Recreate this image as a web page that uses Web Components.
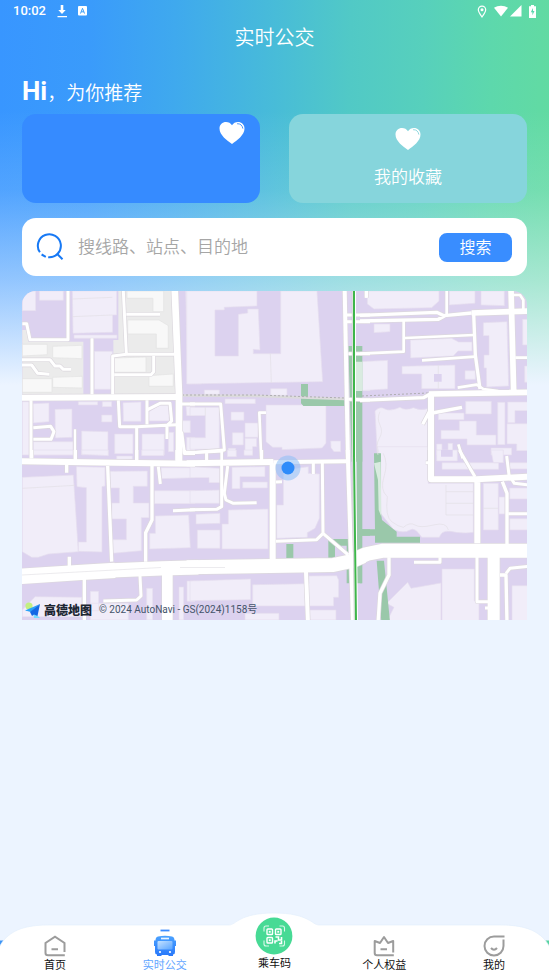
<!DOCTYPE html>
<html lang="zh-CN">
<head>
<meta charset="utf-8">
<meta name="viewport" content="width=device-width, initial-scale=1">
<title>实时公交</title>
<style>
html,body{margin:0;padding:0}
body{font-family:Roboto,"Noto Sans CJK SC",sans-serif;color:#fff}
</style>
</head>
<body>
<transit-page>
  <status-bar slot="top" time="10:02"></status-bar>
  <page-title slot="top">实时公交</page-title>
  <hello-line name="Hi">，为你推荐</hello-line>
  <card-row>
    <fav-card kind="solid" label="收藏"></fav-card>
    <fav-card kind="soft">我的收藏</fav-card>
  </card-row>
  <search-box hint="搜线路、站点、目的地">搜索</search-box>
  <city-map></city-map>
  <tab-bar slot="bottom">
    <tab-item icon="home">首页</tab-item>
    <tab-item icon="bus" active>实时公交</tab-item>
    <tab-item icon="code">乘车码</tab-item>
    <tab-item icon="crown">个人权益</tab-item>
    <tab-item icon="me">我的</tab-item>
  </tab-bar>
</transit-page>
<script>
const define = (name, render) => customElements.define(name, class extends HTMLElement {
  constructor() { super(); this.attachShadow({ mode: 'open' }); }
  connectedCallback() { this.shadowRoot.innerHTML = render(this); }
});

define('transit-page', () => `
<style>
:host{display:flex;flex-direction:column;min-height:100vh;
 background:linear-gradient(to bottom,rgba(236,244,255,0) 110px,rgba(236,244,255,.14) 190px,rgba(236,244,255,.5) 280px,#ecf4ff 385px),
 linear-gradient(91deg,#3896ff 0%,#3a9bfb 16%,#3fa9ee 31%,#48bcd8 49%,#51c9c6 62%,#57d0bc 75%,#5dd8ac 87%,#63dba0 100%)}
main{flex:1;display:flex;flex-direction:column;gap:15px;padding:0 22px 20px}
</style>
<header><slot name="top"></slot></header>
<main><slot></slot></main>
<slot name="bottom"></slot>`);

define('status-bar', el => `
<style>
:host{display:flex;align-items:center;height:22px;padding:0 12px 0 13px;font:500 13px/22px Roboto,sans-serif}
.left{display:flex;align-items:center;gap:10px;flex:1}
.right{display:flex;align-items:center;gap:2px}
svg{display:block}
.pin{margin-right:5px}.bat{margin-left:4px}
</style>
<div class="left"><span>${el.getAttribute('time')}</span>
<svg width="12" height="14" viewBox="0 0 12 14"><path fill="#fff" d="M4.700 1h2.600v5h2.400L6 10 2.300 6H4.700zM1.500 12h9.500v1.300h-9.500z"/></svg>
<svg width="10" height="10" viewBox="0 0 10 10"><rect width="9" height="9.500" rx="1" fill="#fff"/><path d="M2.500 7.500 4.500 2.300 6.500 7.500M3.200 5.800H5.800" fill="none" stroke="#3d9ff7" stroke-width="1"/></svg></div>
<div class="right">
<svg class="pin" width="10" height="13" viewBox="0 0 10 13"><path d="M5 12C3 9.300 1.300 7 1.300 4.800a3.700 3.700 0 0 1 7.400 0C8.700 7 7 9.300 5 12z" fill="none" stroke="#fff" stroke-width="1.200"/><circle cx="5" cy="4.800" r="1.500" fill="#fff"/></svg>
<svg width="14" height="12" viewBox="0 0 14 12"><path d="M0 2.800C4 0 10 0 14 2.800L7 11.500z" fill="#fff"/></svg>
<svg width="12" height="12" viewBox="0 0 12 12"><path d="M11.500 0v11.500H0z" fill="#fff"/></svg>
<svg class="bat" width="9" height="13" viewBox="0 0 9 13"><path d="M3 0h3v1.300h2V13H1V1.300h2z" fill="#fff"/><path d="M5 3 2.800 7.300h1.600v3L6.500 6H5z" fill="#5bd6ad"/></svg>
</div>`);

define('page-title', () => `
<style>:host{display:block;text-align:center}h1{margin:0;font:350 20px/30px "Noto Sans CJK SC",sans-serif}</style>
<h1><slot></slot></h1>`);

define('hello-line', el => `
<style>:host{display:block;padding-top:23px;margin-bottom:-12px}
p{margin:0;font:350 19px/32px "Noto Sans CJK SC",sans-serif;height:36px}b{font:700 26px/32px Roboto,sans-serif}</style>
<p><b>${el.getAttribute('name')}</b><slot></slot></p>`);

define('card-row', () => `
<style>:host{display:grid;grid-template-columns:1fr 1fr;gap:29px}</style><slot></slot>`);

define('fav-card', el => `
<style>
:host{display:grid}
button{all:unset;box-sizing:border-box;cursor:pointer;height:89px;border-radius:14px;display:flex;flex-direction:column;align-items:center;
 font:350 17px/26px "Noto Sans CJK SC",sans-serif;color:#fff;padding:13px 15px 0;gap:12px}
.solid{background:#368bff;align-items:flex-end;padding-top:7px}
.soft{background:#86d5dc}
svg{display:block;flex:none}
</style>
<button class="${el.getAttribute('kind')}" ${el.hasAttribute('label') ? `aria-label="${el.getAttribute('label')}"` : ''}>
<svg width="26" height="24" viewBox="0 0 26 24"><path fill="#fff" d="M13 23C8 19.500.5 14 .5 7.500.500 3.500 3.500 1 7 1c2.500 0 4.800 1.200 6 3.300C14.200 2.200 16.500 1 19 1c3.500 0 6.500 2.500 6.500 6.500C25.500 14 18 19.500 13 23z"/><path d="M18.500 2.700c2.800-.2 4.800 1.600 5.300 4.500" fill="none" stroke="${el.getAttribute('kind') === 'solid' ? '#368bff' : '#86d5dc'}" stroke-width=".9" stroke-linecap="round"/></svg>
<slot></slot></button>`);

define('search-box', el => `
<style>
:host{display:block}
form{display:flex;align-items:center;height:58px;box-sizing:border-box;background:#fff;border-radius:14px;padding:0 15px 0 14px;margin:0}
svg{flex:none;margin-right:14px}
input{all:unset;flex:1;min-width:0;font:350 17px/28px "Noto Sans CJK SC",sans-serif;color:#333;padding-bottom:2px}
input::placeholder{color:#a6a6a6;opacity:1}
button{border:0;background:#398dff;color:#fff;border-radius:8px;width:73px;height:29px;padding:0 0 2px;font:350 16px/27px "Noto Sans CJK SC",sans-serif}
</style>
<form onsubmit="return false">
<svg width="28" height="28" viewBox="0 0 28 28" fill="none" stroke="#1779f5" stroke-width="2"><path d="M3.900 19.300A11.500 11.500 0 1 1 12.200 24.200"/><path d="M5.600 21.500 9.800 23.800"/><path d="M21 20.800 26.500 26.200"/></svg>
<input type="search" aria-label="${el.getAttribute('hint')}" placeholder="${el.getAttribute('hint')}">
<button type="submit"><slot></slot></button>
</form>`);

/* Map tiles: each has an origin, and paths drawn at three units to the pixel.
   land/grey = grey block and its buildings, b = buildings, g = parks, lg = pale park, r = [width, path] roads. */
const tiles = [
 {x:15,y:285,
  land:'M22 170H205V328H22zM22 135H40V180H22zM310 18H480V205L500 330H295V165H310z',
  grey:'M22 178H97V209L22 213zM113 184L201 181V221L113 218zM22 281H111V322H22zM113 277L202 274V309L113 307zM336 18H446V80H414V40H336zM338 105H432L460 122V190H424V147H338zM298 219L393 216V262H298zM402 272L475 267V304H402z',
  b:'M22 18H62V77H22zM73 18H145V46H73zM172 18H305V90H293V142L174 145zM177 150H306V160H177zM238 199H292V313H238zM512 18H560V297H518zM22 350H42V510H22zM54 356L102 354V410L55 414zM120 373L171 372V457L121 459zM190 350H248V360H190zM262 350H290V365H262zM260 390H291V411H260zM55 470H174V510H55zM200 438L279 440V510H200zM299 447H354V506H299zM381 447H448V510H381zM324 353L378 351V409H325zM402 380L435 360H460L463 408H402zM460 442H476V500H460zM513 364H540V392H515zM502 407H526V443H502zM515 457H540V497H515z',
  r:[[9,'M22 116H35L45 164H159V18'],[9,'M18 224H105L120 243H135L145 253H168M18 240H50L68 265L103 268'],[18,'M18 338L500 336'],[20,'M479 10L492 330V530'],[9,'M231 160V328M325 18L334 205M334 88H435M293 328V213L335 208H478M298 269H408L416 260V213M48 346V520M55 428L107 424L117 440L108 463H55M310 346L314 425H365L484 419M365 428V530M396 346V418M398 374L435 355H465L470 408L456 422V462M500 440L508 502H540M500 357H540'],[7,'M180 433V530']],
  l:'M172 42L292 37M172 95L292 90'},
 {x:190,y:285,
  b:'M-10 18H201V63L103 67V75H75V213H145V88L173 84V72H205L210 195L190 193V206H272V18H381L398 290L-10 297zM43 315H88V328H43zM242 311H291V331H242zM105 342H196V356H105zM0 367H88V493H0V458H46V392H0zM123 381H162V406H123zM165 414H204V457H165zM127 443H160V480H127zM165 460H200V485H188V510H165zM115 490H137V510H115zM228 360H408V475L396 489L276 494V487H248L228 470zM422 468H452V500H432L423 488zM517 230H540V317H517z',
  g:'M333 297H354V340H465V363H340L333 355zM475 183H517V530H485z',
  lg:'M498 230H517V318H498z',
  r:[[12,'M464 10L474 530'],[9,'M470 90H540M470 110H540M475 206H540M475 343L540 345M530 18V38M0 357H92L103 495L0 503'],[8,'M228 383H208L214 530M50 505V530M95 500V530']],
  l:'M241 206L244 292M46 367V392'},
 {x:360,y:285,
  b:'M22 18H237V48L215 68L42 72L22 57zM268 18H345V55L268 60zM363 18H433V62L363 60zM42 117H90V140L42 143zM151 165L275 160L296 171H336V198H294L280 213L152 219zM0 230L83 226V312L0 317zM126 244L285 240V311H185V267H126zM315 257H346V283H315zM370 113L441 110L446 303L380 306L379 249H372V210H387V152H370zM488 103H505V180H488zM494 243H505V292H494zM317 349H394V387H317zM235 384H312V404H235zM243 436H298V408H349V450H408V480H321V462H243zM413 352H435V479H413zM443 351H505V377H465V413H443zM441 416H505V497H470V477H441zM393 489H455V510H393zM230 477H246V510H230zM264 475H278V510H264zM45 378Q60 362 75 372Q90 380 120 367Q135 378 160 368Q180 378 203 371V510H52z',
  g:'M0 183H6V230H0zM0 318H6V510H0z',
  r:[[10,'M0 91L230 82L252 92L335 84M0 108L235 103L255 92'],[17,'M335 84L505 78'],[8,'M260 10V88M131 105V200L0 206M135 159L342 150M186 226L345 215M455 30H480L490 45V75M466 218H505M293 308L350 299L370 312L415 318M18 18V38M295 478L308 520'],[10,'M341 85L346 210L360 312M0 346L190 338L215 325M217 384L306 367M208 380L188 418'],[17,'M453 10L461 318M207 327L505 322'],[18,'M213 325V530']],
  sq:'M222 267H245V290H222z', l:'M235 242V267M235 290V311M60 380Q50 400 60 420T58 460T54 510'},
 {x:15,y:450,
  b:'M54 0H174V15H54zM200 0H280V17L200 13zM305 18H352V28H305zM380 0H446V17H380zM22 82L175 75L190 305L100 312L70 322H50L22 305zM184 50L270 52V108L261 110V306L190 304V276H214V113L186 110zM285 64L397 63V109H355V159H402V203H379V302L293 310V269H334V207H290V159H313V114H285zM438 53H540V83L440 86zM418 122H540V161H418zM421 198L521 195L526 293L404 297V250H421zM395 415H413V510H395zM226 424H251V482H226zM226 460H340V510H226zM60 440L200 442V500H22V480zM492 411H506V510H492zM516 393H540V454H516z',
  r:[[18,'M18 34L300 38L540 41'],[46,'M18 379L200 367L300 361'],[43,'M290 361L440 355L550 352'],[10,'M181 0V30M50 0V25M365 0V32M508 0V10H540M155 40V68M278 48L290 335M411 48V210L392 248V335M163 320V350M208 385V520'],[18,'M490 0V32'],[9,'M430 50L436 102M474 182L540 179M375 378L378 438L365 450L265 453'],[32,'M457 360V520']],
  l:'M22 115L180 106'},
 {x:190,y:450,
  b:'M0 50L90 55V98H57V83H0zM0 122L88 120V160H0zM126 52L225 50V80H150V116H126zM158 96H232V114H158zM18 193L90 190V220L18 222zM22 240H90V295H22zM115 180L234 177V297H96V222H115zM280 60L355 50V70L388 72V205L375 235L352 248V262L260 265V165H280zM0 393L182 387V449L0 452zM188 404L357 401V378L440 377L446 390V442H431V468H188zM165 490H267V510H165zM357 480H438V510H357zM112 0H139V20H112zM162 0H188V16H162z',
  g:'M289 282H310V325H289zM415 267H470V287H435V325H415zM470 267H500V0H517V238H540V257H517V400H470z',
  r:[[18,'M-10 40L250 36'],[12,'M250 37L470 34'],[9,'M0 8L100 3M50 10V30M215 0V30M95 45V170L80 178L0 179M113 48L103 130L108 150L130 160L200 158M258 96L276 95M370 36V72M397 38L399 250L380 269L258 274M399 250L475 315'],[18,'M248 40V330'],[42,'M-10 352L240 348L430 345L485 333L520 319'],[12,'M473 0L483 320L489 520M348 365L354 520']]},
 {x:360,y:450,
  b:'M52 -10L62 30V190L100 238Q130 252 150 240Q165 230 185 262H238Q245 240 270 244Q310 252 340 247V100H205V-10zM246 38H416V58H246zM230 0H292V33H230zM393 0H430V38H400zM370 100H415V240H370zM417 141H435V192H417zM449 114H505V147H449zM449 206H505V240H449zM449 38H505V57H449zM80 460L143 397L153 415L243 399V515H80L102 472zM246 357H343V452H357V515H246zM456 407H505V515H456z',
  g:'M0 0H5V400H0zM42 10H63V190L66 210L110 245V260H180V278H45V257H0V238H45zM50 332H72L90 515H64z',
  lg:'M42 40L62 35L64 200L56 180L54 90z',
  r:[[18,'M213 0V88H350L505 80M352 90V280'],[9,'M298 0L345 80M197 38H213M440 18L447 75L463 100L505 105M445 191H505M351 320V455H384M375 474H390M162 337H240V322M438 370L450 355L505 349'],[10,'M427 95L441 130V285M87 322V375L60 430L54 520M420 375H438L441 520'],[42,'M-20 330L20 312L70 302H505'],[36,'M401 310V520']],
  sq:'M243 0H278V20H243z',
  l:'M258 105V195H340M258 125H340M258 160H340M370 175H415M70 10Q85 40 72 80T82 140Q75 200 95 215T130 232Q150 215 165 225T220 225T265 240'}
];
const layer = (key, attrs) => tiles.filter(t => t[key]).map(t =>
  `<path transform="translate(${t.x} ${t.y}) scale(.33333)" d="${t[key]}" ${attrs}/>`).join('');
const roads = (extra, colour) => tiles.map(t => `<g transform="translate(${t.x} ${t.y}) scale(.33333)">` +
  t.r.map(([w, d]) => `<path d="${d}" stroke="${colour}" stroke-width="${w + extra}"/>`).join('') + '</g>').join('');

define('city-map', () => `
<style>
:host{display:block;position:relative;border-radius:14px 14px 0 0;overflow:hidden}
.map{display:block;width:100%;height:auto}
.credit{position:absolute;left:3px;bottom:0;display:flex;align-items:center;height:20px;color:#44546a;font:400 10px/20px Roboto,"Noto Sans CJK SC",sans-serif;white-space:nowrap}
b{font:900 12px/20px "Noto Sans CJK SC",sans-serif;color:#1d2733;margin:0 7px 0 3px}
</style>
<svg class="map" viewBox="22 291 505 329" role="img" aria-label="地图">
<rect x="22" y="291" width="505" height="329" fill="#dcd2ef"/>
${layer('land', 'fill="#ebebeb"')}
${layer('grey', 'fill="#f8f8f8" stroke="#e3e3e3" stroke-width="2"')}
${layer('b', 'fill="#f1edf9" stroke="#e5deef" stroke-width="2"')}
${layer('sq', 'fill="#dcd2ef"')}
${layer('g', 'fill="#9ac8aa"')}
${layer('lg', 'fill="#d9ebe0"')}
${layer('l', 'fill="none" stroke="#e2dfe6" stroke-width="2"')}
<g fill="none" stroke-linejoin="round">
<path d="M182 395.500 257 396 345 399" stroke="#dcdbdc" stroke-width="2.500"/>
<path d="M182 395 257 395 345 398M362 396 428 393" stroke="#aeadb0" stroke-width="1" stroke-dasharray="2 2"/>
${roads(4, '#dcd8de')}${roads(0, '#fff')}
<path d="M22 575 161 567.500M180 567.500H225" stroke="#e4e2e6" stroke-width=".7"/>
<path d="M354 291V455L356 620" stroke="#fff" stroke-width="4"/>
<path d="M352.300 291V455L354.300 620" stroke="#b8b8bc" stroke-width=".6"/>
<path d="M354 291V455L356 620" stroke="#3fb64b" stroke-width="2"/>
</g>
<circle cx="288" cy="468" r="12.500" fill="#8dbdf5" fill-opacity=".55"/><circle cx="288" cy="468" r="6.500" fill="#2e8cfa"/>
</svg>
<div class="credit"><svg width="16" height="17" viewBox="0 0 16 17"><circle cx="4" cy="4" r="3.600" fill="#c3ef82"/><path d="M8 10 15 16H9z" fill="#78dcff"/><path d="M15 2 0 8.500 6 10z" fill="#29a2f8"/><path d="M15 2 5 10 7 14 9 12.500 12.500 14z" fill="#1468e4"/></svg><b>高德地图</b><span>© 2024 AutoNavi - GS(2024)1158号</span></div>`);

define('tab-bar', () => `
<style>
:host{display:block;position:relative}
.bg{position:absolute;inset:0;width:100%;height:100%;z-index:0}
nav{position:relative;display:grid;grid-template-columns:repeat(5,1fr);align-items:end;height:64px}
</style>
<svg class="bg" viewBox="0 912 549 64" preserveAspectRatio="none" aria-hidden="true"><path d="M0 940H8V960H0z" fill="#3d94f5"/><path d="M541 940H549V960H541z" fill="#55d49f"/><path d="M0 912H549V940.500H0z" fill="#ecf4ff"/><path d="M-4 980V955C3 933 20 925 48 925H229C236 925 239 913 274 913S312 925 319 925H501C529 925 546 933 553 955V980z" fill="#fff" stroke="#e4effc" stroke-width=".7"/></svg>
<nav><slot></slot></nav>`);

const q = (x, y) => `<rect x="${x}" y="${y}" width="5.500" height="5.500" rx=".8" stroke-width="1.400"/><rect x="${x + 1.8}" y="${y + 1.8}" width="1.900" height="1.900" fill="#fff" stroke="none"/>`;
const icons = {
  home: '<svg width="22" height="22" viewBox="0 0 22 22" fill="none" stroke="#9c9c9c" stroke-width="2"><path d="M20.500 17V8L11 1.700 1.500 8V18Q1.500 20.300 4 20.300H20.800M7.500 14.300H14"/></svg>',
  bus: '<svg width="24" height="28" viewBox="0 0 24 28"><defs><linearGradient id="a" x2="0" y2="1"><stop stop-color="#4ba2ff"/><stop offset="1" stop-color="#2878fa"/></linearGradient><linearGradient id="b" x2="1" y2="1"><stop stop-color="#c5e2ff"/><stop offset="1" stop-color="#58a4ff"/></linearGradient></defs><path d="M7.500 1.500H16.500" stroke="#3c8cff" stroke-width="1.800"/><path d="M5 7.500Q12 6 19 7.500 21.500 8 21.500 11.500H23V17H22V23Q22 25.500 20 25.500V27H15.500V26H8.500V27H4V25.500Q2 25.500 2 23V17H1V11.500H2.500Q2.500 8 5 7.500z" fill="url(#a)"/><rect x="4.500" y="12" width="15" height="8.500" rx="1" fill="url(#b)"/><path d="M8 9.500H16" stroke="#e9f4ff" stroke-width="1.700"/><circle cx="7" cy="23" r="1.100" fill="#fff"/><circle cx="17" cy="23" r="1.100" fill="#fff"/></svg>',
  code: `<svg width="38" height="38" viewBox="0 0 38 38"><circle cx="19" cy="19" r="18.400" fill="#47da95"/><g fill="none" stroke="#fff"><path d="M14 9H11Q9 9 9 11V14.500M24.500 9H27.500Q29.500 9 29.500 11V14.500M9 23.500V27Q9 29 11 29H14M24.500 29H27.500Q29.500 29 29.500 27V23.500" stroke-width="1.100" opacity=".8"/>${q(12,12)}${q(20.5,12)}${q(12,20.5)}<path d="M20.500 20H23.500V23H26.500V20M20 26.500V24H22.500M24 26.500H26.500V24" stroke-width="1.600"/></g></svg>`,
  crown: '<svg width="22" height="22" viewBox="0 0 22 22" fill="none" stroke="#9c9c9c" stroke-width="2" stroke-linejoin="round"><path d="M20.200 17.500V6L15 8 11 2 7 8 1.700 6V18Q1.700 20.300 4 20.300H20.800M7.500 14.300H14"/></svg>',
  me: '<svg width="22" height="22" viewBox="0 0 22 22" fill="none" stroke="#9c9c9c" stroke-width="2"><path d="M21.500 1.500H11A9.500 9.500 0 1 0 20.500 11V4.500M8 13Q11 16.500 14 13"/></svg>'
};
define('tab-item', el => {
  const icon = el.getAttribute('icon');
  return `
<style>
:host{display:block}
a{display:flex;flex-direction:column;align-items:center;text-decoration:none;color:#111;font:400 11px/16px "Noto Sans CJK SC",sans-serif;padding-bottom:4px}
a.active{color:#5fa5ff}
a.code{padding-bottom:6px}
svg{display:block;margin-bottom:-1px}
</style>
<a href="#${icon}" class="${icon}${el.hasAttribute('active') ? ' active' : ''}">${icons[icon]}<span><slot></slot></span></a>`;
});
</script>
</body>
</html>
